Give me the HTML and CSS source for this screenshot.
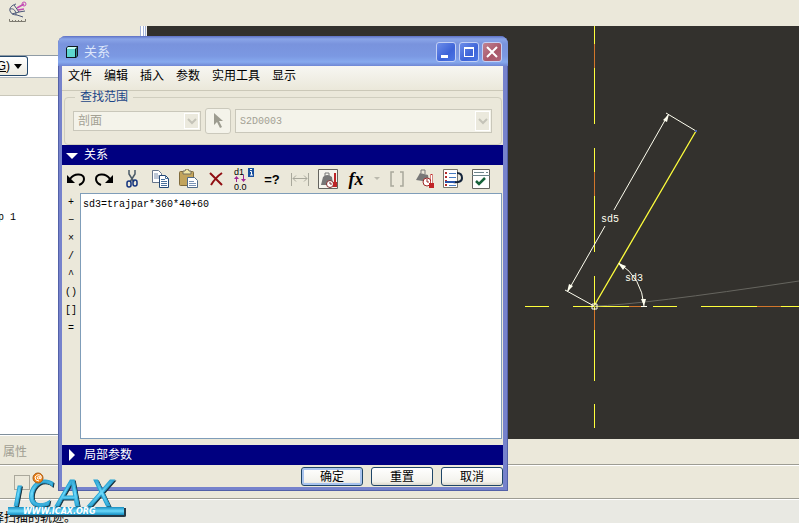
FILE: index.html
```html
<!DOCTYPE html>
<html lang="zh-CN">
<head>
<meta charset="utf-8">
<title>关系</title>
<link rel="stylesheet" href="styles.css">
</head>
<body>
<div class="app">
  <header class="topbar">
    <svg width="20" height="22" viewBox="0 0 20 22" fill="none" aria-hidden="true">
      <path d="M8 3C4 4 1 7 2 10C3 13 6 14 9 14L15 16M2 8C6 7 8 10 8 14M6 4L11 11L17 10M4 13L11 11" stroke="#4a5678"/>
      <path d="M9 7L16 3M10 9L16 8" stroke="#c34bb4" stroke-width="1.500"/><circle cx="16" cy="3" r="2" stroke="#c34bb4"/>
      <path d="M1.500 18V20.500H17.500V18M4.500 19V21M7.500 19V21M10.500 19V21M13.500 19V21" stroke="#7d7a70"/>
    </svg>
  </header>

  <main class="workspace">
    <aside class="side">
      <div class="side-filter"><button type="button" class="filter-btn"><span><u>G</u>)</span><span class="caret"></span></button></div>
      <div class="tree"><span class="tree-item">p 1</span></div>
      <div class="side-tab">属性</div>
    </aside>
    <div class="splitter"></div>
    <section class="canvas">
      <svg class="sketch" viewBox="147 26 652 413" preserveAspectRatio="xMinYMin slice" fill="none">
        <g stroke="#ffff3c">
          <path d="M594.500 26V124M594.500 148V252M594.500 276V381M594.500 404V428"/>
          <path d="M525 306.500H549M573 306.500H629M653 306.500H677M701 306.500H799"/>
          <path d="M594 306L696 131" stroke-width="1.300"/>
        </g>
        <path d="M594.500 44V68M594.500 172V196M594.500 310V330M629 306.500H645M757 306.500H781" stroke="#d2762a"/>
        <path d="M594 306Q640 305 799 281" stroke="#66655f"/>
        <g stroke="#fffff0">
          <path d="M696 131L666 113M594 306L565 290M668 115L614 210M605 226L568 291"/>
          <path d="M619 263Q642 278 644 306M641 306.500H647M592 304H597V309H592Z"/>
        </g>
        <g fill="#fffff0">
          <path d="M669 114L667 122L663 120ZM567 292L569 284L573 286ZM618 263L626 266L623 270ZM644 306L641 299H646Z"/>
          <text x="601" y="222" class="dim">sd5</text>
          <text x="625" y="281" class="dim">sd3</text>
        </g>
        <path d="M695 130H697V132H695Z" fill="#4a66b8"/>
      </svg>
    </section>
  </main>

  <div class="lowbar"><span class="ghost-box"></span></div>
  <footer class="status"><span class="status-text">择扫描的轨迹。</span></footer>

  <section class="dialog" role="dialog" aria-labelledby="dlg-title">
    <div class="titlebar">
      <svg width="14" height="14" viewBox="0 0 14 14" aria-hidden="true">
        <path d="M1 3L3 1H13V11L11 13H1Z" fill="#101820"/>
        <path d="M2 4H10V12H2Z" fill="#5fd6cf"/><path d="M2 3L3 2H12L10 4H2Z" fill="#c8fff5"/><path d="M11 4L12 3V11L11 12Z" fill="#2a8583"/>
      </svg>
      <h1 id="dlg-title" class="title">关系</h1>
      <div class="win-buttons">
        <button type="button" class="win-btn" aria-label="最小化"><svg width="18" height="18"><path d="M4 12H11V15H4Z" fill="#fff"/></svg></button>
        <button type="button" class="win-btn" aria-label="最大化"><svg width="18" height="18"><path d="M4 4H14V14H4ZM5 6V13H13V6Z" fill="#fff" fill-rule="evenodd"/></svg></button>
        <button type="button" class="win-btn win-close" aria-label="关闭"><svg width="18" height="18"><path d="M4 4L14 14M14 4L4 14" stroke="#fff" stroke-width="2"/></svg></button>
      </div>
    </div>
    <div class="dialog-body">
      <nav class="menu">
        <button type="button">文件</button><button type="button">编辑</button><button type="button">插入</button><button type="button">参数</button><button type="button">实用工具</button><button type="button">显示</button>
      </nav>
      <fieldset class="scope">
        <legend>查找范围</legend>
        <div class="scope-row">
          <div class="combo combo-small"><select aria-label="对象类型" disabled><option>剖面</option></select><span class="combo-arrow"><svg width="10" height="8" viewBox="0 0 10 8"><path d="M1 2L5 6L9 2" fill="none" stroke="#c4c3b8" stroke-width="2"/></svg></span></div>
          <button type="button" class="pick" aria-label="选取" disabled><svg width="12" height="18" viewBox="0 0 12 18"><path d="M2 1V13L5 10L8 16L10 15L7 9H11Z" fill="#9d9c90"/></svg></button>
          <div class="combo combo-large"><select aria-label="对象名称" disabled><option>S2D0003</option></select><span class="combo-arrow"><svg width="10" height="8" viewBox="0 0 10 8"><path d="M1 2L5 6L9 2" fill="none" stroke="#c4c3b8" stroke-width="2"/></svg></span></div>
        </div>
      </fieldset>

      <h2 class="band"><svg width="12" height="12"><path d="M0 4H12L6 10Z" fill="#fff"/></svg>关系</h2>

      <div class="toolbar">
        <button type="button" aria-label="撤销"><svg width="20" height="20" fill="none"><path d="M4 10C9 3 18 5 18 10Q18 14 13 16" stroke="#000" stroke-width="2"/><path d="M1 6V14H9Z" fill="#000"/></svg></button>
        <button type="button" aria-label="重做"><svg width="20" height="20" fill="none"><path d="M16 10C11 3 2 5 2 10Q2 14 7 16" stroke="#000" stroke-width="2"/><path d="M19 6V14H11Z" fill="#000"/></svg></button>
        <button type="button" aria-label="剪切"><svg width="20" height="20" fill="none"><path d="M7 1V5L12 13M13 1V5L8 13" stroke="#4a5a68" stroke-width="1.500"/><rect x="5" y="12" width="4" height="6" rx="2" stroke="#12327e" stroke-width="1.500"/><rect x="11" y="11" width="4" height="6" rx="2" stroke="#12327e" stroke-width="1.500"/></svg></button>
        <button type="button" aria-label="复制"><svg width="20" height="20" fill="none"><path d="M2.500 1.500H8.500L11.500 4.500V13.500H2.500Z" fill="#fff" stroke="#66758a"/><path d="M4 5H8M4 7H9M4 9H9" stroke="#7d90ad"/><path d="M9.500 6.500H15.500L18.500 9.500V18.500H9.500Z" fill="#fff" stroke="#244875"/><path d="M15.500 6.500V9.500H18.500M11 10.500H15M11 12.500H17M11 14.500H17M11 16.500H17" stroke="#49709b"/></svg></button>
        <button type="button" aria-label="粘贴"><svg width="20" height="20" fill="none"><rect x="1.500" y="2.500" width="14" height="14" rx="1" fill="#c2a45c" stroke="#806b3b"/><path d="M5 5V2H7L8 0H10L11 2H13V5Z" fill="#f0e7a9" stroke="#77715c"/><path d="M9.500 8.500H16.500L19.500 11.500V18.500H9.500Z" fill="#fff" stroke="#506b89"/><path d="M11 12.500H16M11 14.500H18M11 16.500H18" stroke="#7993b5"/></svg></button>
        <button type="button" aria-label="删除"><svg width="20" height="20" fill="none"><path d="M4 4L16 16M16 4Q10 8 5 16" stroke="#900e12" stroke-width="2"/></svg></button>
        <button type="button" aria-label="切换尺寸"><svg width="22" height="24" viewBox="0 0 22 24"><text x="1" y="8" class="icon-num">d1</text><text x="1" y="23" class="icon-num">0.0</text><path d="M3.500 15V11M10.500 8V13" stroke="#a22694"/><path d="M1 12L3.500 9L6 12ZM8 12H13L10.500 15Z" fill="#a22694"/><path d="M15 1H21V10H15Z" fill="#174f9e"/><path d="M17 4.500H18.500V8M17 8H20M17 2.500H19" stroke="#fff" fill="none"/></svg></button>
        <button type="button" class="tool-query" aria-label="求值">=?</button>
        <button type="button" aria-label="尺寸" disabled><svg width="20" height="20" fill="none" stroke="#a9a89c"><path d="M1.500 4V17M18.500 4V17M3 9.500H17M6 6.500L3 9.500L6 12.500M14 6.500L17 9.500L14 12.500"/></svg></button>
        <button type="button" aria-label="单位"><svg width="20" height="20" fill="none"><path d="M.500 .500H19.500V19.500H.500Z" fill="#f5f4ed" stroke="#64635e"/><path d="M3 16L5 8Q9 4 14 8L15 16Z" fill="#777"/><path d="M7 7V4H11V7" stroke="#777"/><circle cx="12" cy="15" r="3.500" fill="#fff" stroke="#812c2c"/><path d="M12 13V15H14" stroke="#812c2c"/><path d="M16 4H18V13H19V18H15V13H16Z" fill="#bd2527"/></svg></button>
        <button type="button" class="tool-fx" aria-label="函数">fx</button>
        <button type="button" class="tool-drop" aria-label="更多函数" disabled><svg width="6" height="4"><path d="M0 0H6L3 3Z" fill="#bbb9ad"/></svg></button>
        <button type="button" aria-label="括号" disabled><svg width="20" height="20" fill="none" stroke="#a9a89c" stroke-width="1.500"><path d="M7 3H4V17H7M13 3H16V17H13"/></svg></button>
        <button type="button" aria-label="单位检查"><svg width="20" height="20" fill="none"><path d="M1 11L5 4L13 6L14 13Z" fill="#777"/><path d="M6 4V1H10V5" stroke="#777"/><circle cx="12" cy="13" r="4" fill="#fff" stroke="#9c2929"/><path d="M12 10V13H14" stroke="#9c2929"/><path d="M15.500 5H17.500V14H19V19H14V14H15.500Z" fill="#c12427"/><path d="M16.500 6V14" stroke="#fff"/></svg></button>
        <button type="button" aria-label="排序"><svg width="20" height="20" fill="none"><path d="M.500 .500H14.500V18.500H.500Z" fill="#fff" stroke="#77756b"/><path d="M3 3V5M3 7V9M3 11V13M3 15V17" stroke="#b42c2c" stroke-width="2"/><path d="M6 4.500H13M6 8.500H13M6 12.500H13M6 16.500H13" stroke="#477cc0"/><path d="M14 4Q19 4 19 9Q19 14 10 13" stroke="#14243b" stroke-width="2"/><path d="M2 13H12" stroke="#2854a9" stroke-width="2"/></svg></button>
        <button type="button" aria-label="校验"><svg width="20" height="20" fill="none"><path d="M1.500 .500H18.500V19.500H1.500Z" fill="#fff" stroke="#64635e"/><path d="M3 3.500H13M15 3.500H17M1 6.500H19" stroke="#6d858c"/><path d="M5 12L8 15L14 9" stroke="#17623a" stroke-width="2.500"/></svg></button>
      </div>

      <div class="editor">
        <div class="operators">
          <button type="button">+</button><button type="button">−</button><button type="button">×</button><button type="button">/</button><button type="button">^</button><button type="button">()</button><button type="button">[]</button><button type="button">=</button>
        </div>
        <textarea aria-label="关系" spellcheck="false">sd3=trajpar*360*40+60</textarea>
      </div>

      <h2 class="band band-closed"><svg width="12" height="12"><path d="M3 0V12L9 6Z" fill="#fff"/></svg>局部参数</h2>
      <div class="actions">
        <button type="button" class="act act-default">确定</button>
        <button type="button" class="act">重置</button>
        <button type="button" class="act">取消</button>
      </div>
    </div>
  </section>

  <svg class="logo" width="128" height="50" viewBox="0 0 128 50" role="img" aria-label="iCAX">
    <defs>
      <linearGradient id="cyan" x1="0" y1="0" x2="0" y2="1"><stop offset="0" stop-color="#1a8fc2"/><stop offset=".5" stop-color="#6bd8fa"/><stop offset="1" stop-color="#118cc1"/></linearGradient>
    </defs>
    <g class="logo-word" fill="url(#cyan)">
      <text x="13" y="36">ı</text>
      <text x="28" y="36">C</text>
      <text x="57" y="36">A</text>
      <text x="89" y="36">X</text>
    </g>
    <circle cx="38" cy="8" r="5" fill="#f58616" stroke="#a55a18"/>
    <path d="M40 6V9Q42 9 41 6Q38 3 35 7Q35 11 39 11M40 7Q37 6 37 8Q38 10 40 8" fill="none" stroke="#fff"/>
    <path d="M10 38H126V46Q126 47 124 47H10Z" fill="#263946"/>
    <path d="M8 37H124V45H8Z" fill="url(#cyan)"/>
    <text x="23" y="44" class="logo-url">WWW.ICAX.ORG</text>
  </svg>
</div>
</body>
</html>
```
FILE: styles.css
```css
* { box-sizing: border-box; }

body {
  margin: 0;
  background: #ebe8da;
  font: 12px/16px "Liberation Sans", "Noto Sans CJK SC", sans-serif;
  color: #000;
}

button, select, textarea { font: inherit; color: inherit; margin: 0; }
button { padding: 0; border: 0; background: none; }
svg { display: block; flex: none; }
h1, h2 { margin: 0; font-size: 12px; font-weight: normal; }

.app {
  position: relative;
  display: flex;
  flex-direction: column;
  height: 100vh;
  min-height: 500px;
  overflow: hidden;
}

.topbar { flex: none; height: 26px; padding: 1px 8px; }

/* workspace */
.workspace { flex: 1; display: flex; min-height: 0; }
.side { width: 140px; display: flex; flex-direction: column; padding-top: 29px; }
.side-filter {
  height: 23px;
  background: #fff;
  border-top: 1px solid #8f9ba5;
  border-bottom: 1px solid #b0b8be;
}
.filter-btn {
  display: flex;
  align-items: center;
  justify-content: flex-end;
  gap: 4px;
  width: 28px;
  height: 20px;
  padding-right: 5px;
  border: 1px solid #24486c;
  border-left: 0;
  border-radius: 0 3px 3px 0;
  background: linear-gradient(#fff, #eceae0);
}
.caret { border: 4px solid transparent; border-top: 5px solid #000; border-bottom: 0; }
.tree {
  flex: 1;
  margin-top: 17px;
  padding-top: 113px;
  background: #fff;
  border-top: 1px solid #c9c7ba;
  border-bottom: 1px solid #7f8f9b;
}
.tree-item { display: block; font: 10px/18px "Liberation Mono", monospace; margin-left: -2px; }
.side-tab { height: 29px; padding: 8px 3px; color: #a09e92; border-top: 1px solid #fff; }
.splitter {
  width: 7px;
  margin-bottom: 25px;
  background: linear-gradient(90deg, #a4b4d8 1px, #fff 1px 3px, #a4b4d8 3px 4px, #fff 4px 5px, #a4b4d8 5px 6px, #f4f4f0 6px);
}
.canvas { flex: 1; min-width: 0; margin-bottom: 25px; background: #33312d; overflow: hidden; }
.sketch { width: 100%; height: 100%; }
.dim { font: 10px "Liberation Mono", monospace; }

.lowbar { flex: none; height: 34px; padding: 10px 14px; border-top: 1px solid #9d9c93; box-shadow: inset 0 1px #fff; }
.ghost-box { display: block; width: 16px; height: 15px; border: 1px solid #aaa89c; }
.status {
  flex: none;
  height: 25px;
  padding-top: 11px;
  background: #e9e9e3;
  border-top: 1px solid #9d9c93;
  box-shadow: inset 0 1px #fff;
  white-space: nowrap;
}
.status-text { display: block; margin-left: -8px; line-height: 16px; }

/* dialog */
.dialog {
  position: absolute;
  left: 58px;
  top: 36px;
  width: 450px;
  max-width: calc(100vw - 58px);
  padding: 0 5px 4px 4px;
  background: #7682cc;
  border-radius: 8px 8px 0 0;
  box-shadow: inset 1px -1px #5361a8, inset -1px 0 #5361a8;
}
.titlebar {
  display: flex;
  align-items: center;
  gap: 5px;
  height: 30px;
  margin: 0 -5px 0 -4px;
  padding: 2px 6px 0 7px;
  border-radius: 8px 8px 0 0;
  background: linear-gradient(#5d70c4, #8aa5e8 3px, #7993dd 8px, #7b98e2 20px, #86a9ee 26px, #6f86d4);
}
.title { font-size: 13px; color: #dce6fb; }
.win-buttons { display: flex; gap: 3px; margin-left: auto; }
.win-btn {
  width: 20px;
  height: 20px;
  border: 1px solid #c3d0f5;
  border-radius: 3px;
  background: linear-gradient(135deg, #6d8de9, #3d63d8 60%, #4c77e6);
}
.win-close { background: linear-gradient(135deg, #c08292, #a95769 60%, #b0667a); }

.dialog-body { background: #ebe8da; }
.menu {
  display: flex;
  gap: 12px;
  height: 25px;
  padding: 0 6px 5px;
  background: linear-gradient(#f7f6f2, #ebe8da);
  border-bottom: 1px solid #cbc8b8;
}
.scope {
  min-width: 0;
  height: 56px;
  margin: -2px 1px 0 2px;
  padding: 0 9px 0 8px;
  border: 1px solid #d0cebf;
  border-radius: 4px;
}
.scope legend { margin-left: 2px; padding: 0 5px; color: #1c4687; }
.scope-row { display: flex; align-items: center; gap: 4px; height: 32px; }
.combo { position: relative; }
.combo-small { flex: 0 0 128px; height: 20px; }
.combo-large { flex: 1; height: 24px; }
.combo select {
  appearance: none;
  display: block;
  width: 100%;
  height: 100%;
  padding: 0 20px 0 4px;
  border: 1px solid #c9c7ba;
  border-radius: 0;
  background: #f4f3ea;
  color: #a3a194;
  opacity: 1;
}
.combo-large select { font: 10px "Liberation Mono", monospace; }
.combo-arrow {
  position: absolute;
  top: 2px;
  right: 2px;
  bottom: 2px;
  width: 15px;
  display: grid;
  place-items: center;
  background: #ebe9dd;
  border: 1px solid #fff;
}
.pick {
  display: grid;
  place-items: center;
  width: 26px;
  height: 26px;
  border: 1px solid #cbc9bc;
  border-radius: 3px;
  background: #f4f3ea;
}

.band {
  display: flex;
  align-items: center;
  gap: 6px;
  height: 20px;
  padding: 0 4px;
  background: #000080;
  color: #fff;
}
.toolbar { display: flex; height: 28px; }
.toolbar button { display: grid; place-items: center; width: 28px; height: 28px; }
.toolbar .tool-query { font: bold 13px "Liberation Sans", sans-serif; }
.toolbar .tool-fx { font: italic bold 18px "Liberation Serif", serif; }
.toolbar .tool-drop { width: 13px; }
.icon-num { font: 9px "Liberation Sans", sans-serif; }

.editor { display: flex; margin-right: 1px; }
.operators { display: flex; flex-direction: column; width: 18px; padding-top: 1px; }
.operators button { height: 18px; font: 10px/18px "Liberation Mono", monospace; }
.editor textarea {
  flex: 1;
  min-width: 0;
  height: 246px;
  padding: 3px 2px;
  border: 1px solid #7f9db9;
  border-radius: 0;
  background: #fff;
  resize: none;
  outline: 0;
  font: 10px/16px "Liberation Mono", monospace;
}
.band-closed { margin-top: 6px; }
.actions { display: flex; justify-content: flex-end; gap: 8px; padding: 2px 0 1px; }
.act {
  width: 62px;
  height: 19px;
  border: 1px solid #1f4668;
  border-radius: 3px;
  background: linear-gradient(#fff, #f3f2ec 80%, #dcd8cc);
  line-height: 16px;
}
.act-default { box-shadow: inset 0 0 0 2px #a9c4ee; }

/* logo */
.logo { position: absolute; left: 0; bottom: 3px; }
.logo-word {
  font: italic 36px "DejaVu Sans", sans-serif;
  stroke: #2aa6d6;
  stroke-width: 1px;
  filter: drop-shadow(1px 1px 0 #173442);
}
.logo-url { font: italic bold 8px "DejaVu Sans", sans-serif; fill: #fff; }
```
